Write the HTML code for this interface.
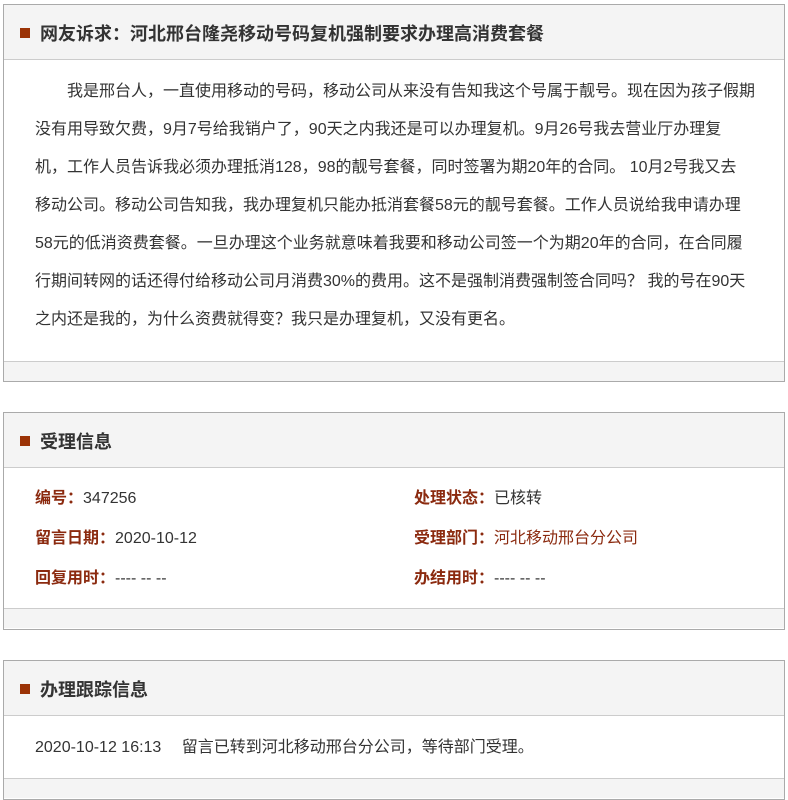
<!DOCTYPE html>
<html><head><meta charset="utf-8"><style>
*{margin:0;padding:0;box-sizing:border-box}
body{width:788px;height:781px;background:#fff;font-family:"Liberation Sans","Noto Sans CJK SC",sans-serif;color:#333;overflow:hidden;position:relative}
.box{position:absolute;left:3px;width:782px;border:1px solid #aaa;background:#fff}
.hd{height:55px;background:#f4f4f4;border-bottom:1px solid #ccc;position:relative}
.hd i{position:absolute;left:16px;top:23px;width:10px;height:10px;background:#9b3306}
.hd b{position:absolute;left:36px;top:15px;font-size:18px;color:#333;white-space:nowrap}
.ft{height:20px;background:#f4f4f4;border-top:1px solid #ccc}
.txt{padding:13px 0 5px 31px;font-size:16px;line-height:38px;white-space:nowrap}
.row{position:absolute;font-size:16px;white-space:nowrap}
.row .l{color:#8b2a0f;font-weight:bold}
</style></head><body>
<div class="box" style="top:4px;height:378px">
<div class="hd"><i></i><b>网友诉求：河北邢台隆尧移动号码复机强制要求办理高消费套餐</b></div>
<div class="txt" style="height:301px">　　我是邢台人，一直使用移动的号码，移动公司从来没有告知我这个号属于靓号。现在因为孩子假期<br>没有用导致欠费，9月7号给我销户了，90天之内我还是可以办理复机。9月26号我去营业厅办理复<br>机，工作人员告诉我必须办理抵消128，98的靓号套餐，同时签署为期20年的合同。 10月2号我又去<br>移动公司。移动公司告知我，我办理复机只能办抵消套餐58元的靓号套餐。工作人员说给我申请办理<br>58元的低消资费套餐。一旦办理这个业务就意味着我要和移动公司签一个为期20年的合同，在合同履<br>行期间转网的话还得付给移动公司月消费30%的费用。这不是强制消费强制签合同吗？ 我的号在90天<br>之内还是我的，为什么资费就得变？我只是办理复机，又没有更名。</div>
<div class="ft"></div>
</div>

<div class="box" style="top:412px;height:218px">
<div class="hd"><i></i><b>受理信息</b></div>
<div style="height:140px;position:relative">
<div class="row" style="left:31px;top:16px"><span class="l">编号：</span>347256</div>
<div class="row" style="left:410px;top:16px"><span class="l">处理状态：</span>已核转</div>
<div class="row" style="left:31px;top:56px"><span class="l">留言日期：</span>2020-10-12</div>
<div class="row" style="left:410px;top:56px"><span class="l">受理部门：</span><span style="color:#8b2a0f">河北移动邢台分公司</span></div>
<div class="row" style="left:31px;top:96px"><span class="l">回复用时：</span>---- -- --</div>
<div class="row" style="left:410px;top:96px"><span class="l">办结用时：</span>---- -- --</div>
</div>
<div class="ft"></div>
</div>

<div class="box" style="top:660px;height:140px">
<div class="hd"><i></i><b>办理跟踪信息</b></div>
<div style="height:62px;position:relative">
<div class="row" style="left:31px;top:17px">2020-10-12 16:13　 留言已转到河北移动邢台分公司，等待部门受理。</div>
</div>
<div class="ft"></div>
</div>
</body></html>
